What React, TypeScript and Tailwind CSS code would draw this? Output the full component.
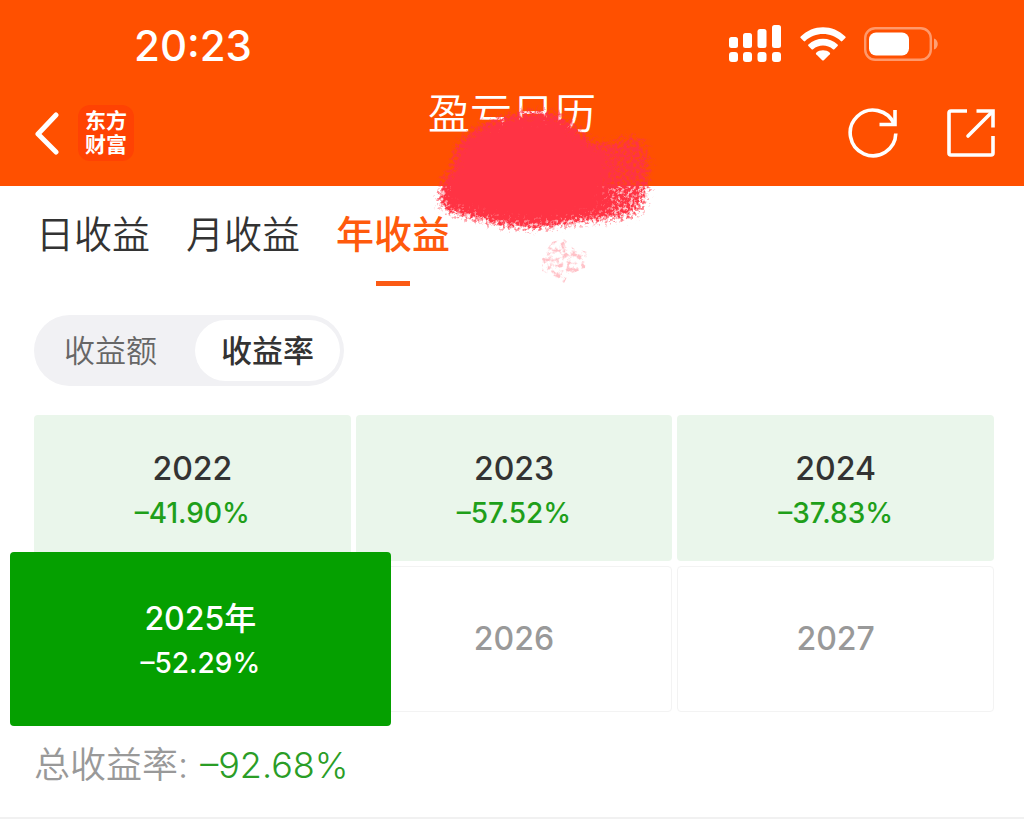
import React, { useState } from 'react';

type YearCell = { year: number; rate?: string };

const TABS = ['日收益', '月收益', '年收益'];
const MODES = ['收益额', '收益率'];

const YEARS: YearCell[] = [
  { year: 2022, rate: '–41.90%' },
  { year: 2023, rate: '–57.52%' },
  { year: 2024, rate: '–37.83%' },
  { year: 2025, rate: '–52.29%' },
  { year: 2026 },
  { year: 2027 },
];

const SignalIcon = () => (
  <svg width="54" height="38" viewBox="0 0 54 38" fill="#fff" aria-hidden="true">
    <rect x="1" y="12" width="9" height="11" rx="2.5" />
    <rect x="15" y="8" width="9" height="15" rx="2.5" />
    <rect x="29.5" y="4" width="9" height="19" rx="2.5" />
    <rect x="44" y="0" width="9" height="23" rx="2.5" />
    {[1, 15, 29.5, 44].map(x => <rect key={x} x={x} y="27" width="9" height="10" rx="3" />)}
  </svg>
);

const WifiIcon = () => (
  <svg width="46" height="34" viewBox="0 0 46 34" fill="#fff" aria-hidden="true">
    <path d="M.7 9.5C13-3 33-3 45.3 9.5c.5.5.5 1 0 1.5l-3 3c-.5.5-1 .5-1.500 0C31 4.700 15 4.700 5.200 14c-.5.5-1 .5-1.500 0l-3-3c-.5-.5-.5-1 0-1.500z" />
    <path d="M8.400 17.500c8-7.600 21.200-7.600 29.200 0 .5.5.5 1 0 1.500l-3.200 3.200c-.5.5-1 .5-1.500 0-5.600-5-14.200-5-19.800 0-.5.5-1 .5-1.500 0L8.400 19c-.5-.5-.5-1 0-1.500z" />
    <path d="M16.200 25.700c3.800-3.200 9.800-3.200 13.600 0 .5.5.5 1 0 1.500l-6 6c-.5.5-1.100.5-1.600 0l-6-6c-.5-.5-.5-1 0-1.500z" />
  </svg>
);

const BatteryIcon = () => (
  <svg width="75" height="34" viewBox="0 0 75 34" fill="none" aria-hidden="true">
    <rect x="1.2" y="1.2" width="65.6" height="31.6" rx="10" stroke="#fff" strokeOpacity=".42" strokeWidth="2.4" />
    <rect x="5" y="5.5" width="40" height="23" rx="7" fill="#fff" />
    <path d="M70 11.500c5 1.500 5 9.500 0 11z" fill="#fff" fillOpacity=".45" />
  </svg>
);

const BackIcon = () => (
  <svg width="26" height="44" viewBox="0 0 26 44" fill="none" stroke="#fff" strokeWidth="5" strokeLinecap="round" strokeLinejoin="round" aria-hidden="true">
    <path d="M22 4 4 23l18 18" />
  </svg>
);

const RefreshIcon = () => (
  <svg width="50" height="50" viewBox="0 0 50 50" fill="none" stroke="#fff" strokeWidth="3.6" aria-hidden="true">
    <path d="M47.8 25.500A22.800 22.800 0 1 1 46.200 16.500" />
    <path d="M47 2v14.500H31.500" />
  </svg>
);

const ShareIcon = () => (
  <svg width="50" height="50" viewBox="0 0 50 50" fill="none" stroke="#fff" strokeWidth="3.6" aria-hidden="true">
    <path d="M21 3H5a2 2 0 0 0-2 2v40a2 2 0 0 0 2 2h40a2 2 0 0 0 2-2V28" />
    <path d="M30.500 3H47v16.500" />
    <path d="M22 28 46 4" strokeLinecap="round" />
  </svg>
);

// Coup de pinceau qui masque le nom du compte
const BrushMark = () => (
  <svg className="absolute left-full top-0 -ml-[174px] pointer-events-none" width="240" height="210" viewBox="420 90 240 210" aria-hidden="true">
    <defs>
      <filter id="brush" x="420" y="90" width="240" height="210" filterUnits="userSpaceOnUse" colorInterpolationFilters="sRGB">
        <feTurbulence type="fractalNoise" baseFrequency="0.32" numOctaves="4" seed="7" result="noise" />
        <feColorMatrix in="noise" type="matrix" values="0 0 0 0 0  0 0 0 0 0  0 0 0 0 0  0 0 0 2.4 -0.7" result="grain" />
        <feGaussianBlur in="SourceAlpha" stdDeviation="7" result="soft" />
        <feComposite in="soft" in2="grain" operator="arithmetic" k2="2.4" k3="1.1" k4="-1.4" result="mix" />
        <feFlood floodColor="#ff3344" />
        <feComposite in2="mix" operator="in" />
      </filter>
      <filter id="speckle" x="530" y="235" width="65" height="60" filterUnits="userSpaceOnUse" colorInterpolationFilters="sRGB">
        <feTurbulence type="fractalNoise" baseFrequency="0.2" numOctaves="5" seed="12" />
        <feColorMatrix type="matrix" values="0 0 0 0 0  0 0 0 0 0  0 0 0 0 0  0 0 0 4 -1.8" result="grain" />
        <feComposite in="SourceGraphic" in2="grain" operator="in" />
      </filter>
    </defs>
    <g filter="url(#brush)">
      <path d="M436 184 450 172 452 150 468 132 495 120 525 113 553 114 570 124 584 140 604 150 606 220 567 226 534 231 505 229 475 222 445 214 434 207 440 196z" />
      <path fillOpacity=".72" d="M596 146 612 142 629 134 644 143 650 165 649 190 643 210 632 222 596 224z" />
    </g>
    <path filter="url(#speckle)" fill="#ff3344" fillOpacity=".3" d="M540 259 550 244 562 241 571 250 585 254 583 270 566 277 562 285 549 277 540 273z" />
  </svg>
);

const StatusBar = () => (
  <div className="flex h-[88px] items-center justify-between pl-[134px] pr-[85px]">
    <time className="pt-1 text-[42px] leading-none font-medium">20:23</time>
    <div className="flex items-center gap-[18px]">
      <SignalIcon />
      <WifiIcon />
      <BatteryIcon />
    </div>
  </div>
);

const NavBar = () => (
  <div className="grid h-[98px] grid-cols-[1fr_auto_1fr] px-7">
    <div className="flex h-[90px] items-center gap-[18px] pl-1.5">
      <button type="button" aria-label="返回"><BackIcon /></button>
      <div className="grid size-14 place-content-center rounded-xl bg-[#ff4203] text-[21px] leading-6 font-bold">
        <span>东方</span>
        <span>财富</span>
      </div>
    </div>
    <h1 className="relative text-[42px] leading-[52px] font-[350]">
      盈亏日历
      <BrushMark />
    </h1>
    <div className="flex h-[90px] items-center justify-end gap-12">
      <button type="button" aria-label="刷新"><RefreshIcon /></button>
      <button type="button" aria-label="分享"><ShareIcon /></button>
    </div>
  </div>
);

const YearCard: React.FC<{ cell: YearCell; selected: boolean; onSelect: () => void }> = ({ cell, selected, onSelect }) => {
  const getCardStyles = () => {
    if (selected) return 'relative z-10 -my-[14px] -ml-6 -mr-10 bg-[#05a000] pt-1 text-white';
    if (cell.rate) return 'bg-[#eaf6eb] pt-1.5 text-[#333333]';
    return 'border border-[#f3f3f3] bg-white text-[#999999]';
  };

  return (
    <button type="button" onClick={onSelect} className={`flex flex-col items-center justify-center rounded ${getCardStyles()}`}>
      <span className="text-[32px] leading-[44px] font-medium">{cell.year}{selected && '年'}</span>
      {cell.rate && (
        <span className={`text-[28px] leading-[44px] font-medium ${selected ? 'text-white' : 'text-[#1f9f1a]'}`}>{cell.rate}</span>
      )}
    </button>
  );
};

export default function App() {
  const [tab, setTab] = useState('年收益');
  const [mode, setMode] = useState('收益率');
  const [year, setYear] = useState(2025);

  return (
    <div className="min-h-screen overflow-x-hidden bg-white font-[Inter,'Noto_Sans_CJK_SC',sans-serif]">
      <header className="relative z-20 bg-[#ff5000] text-white">
        <StatusBar />
        <NavBar />
      </header>

      <main>
        <nav className="flex gap-9 px-9 pt-[22px]">
          {TABS.map(t => (
            <button
              key={t}
              type="button"
              onClick={() => setTab(t)}
              className={`flex flex-col items-center text-[38px] leading-[52px] ${t === tab ? 'font-medium text-[#ff5a0c]' : 'font-[350] text-[#333333]'}`}
            >
              {t}
              <span className={`mt-[21px] h-[5px] w-[34px] ${t === tab ? 'bg-[#fb5a14]' : ''}`} />
            </button>
          ))}
        </nav>

        <div className="mt-[29px] ml-[34px] inline-flex gap-3 rounded-full bg-[#f1f1f4] px-1 py-[5px]">
          {MODES.map(m => (
            <button
              key={m}
              type="button"
              onClick={() => setMode(m)}
              className={`h-[61px] rounded-full px-[26px] text-[31px] leading-none ${m === mode ? 'bg-white font-medium text-[#333333]' : 'font-[350] text-[#666666]'}`}
            >
              {m}
            </button>
          ))}
        </div>

        <section className="mt-[29px] grid auto-rows-[146px] grid-cols-3 gap-[5px] pl-[34px] pr-[30px]">
          {YEARS.map(cell => (
            <YearCard key={cell.year} cell={cell} selected={cell.year === year} onSelect={() => setYear(cell.year)} />
          ))}
        </section>

        <p className="mt-[27px] flex items-center gap-3 border-b-2 border-[#f1f1f1] px-[34px] pb-[26px] text-[36px] leading-[52px] font-[350] text-[#999999]">
          <span>总收益率:</span>
          <span className="text-[#2a9d26]">–92.68%</span>
        </p>
      </main>
    </div>
  );
}
